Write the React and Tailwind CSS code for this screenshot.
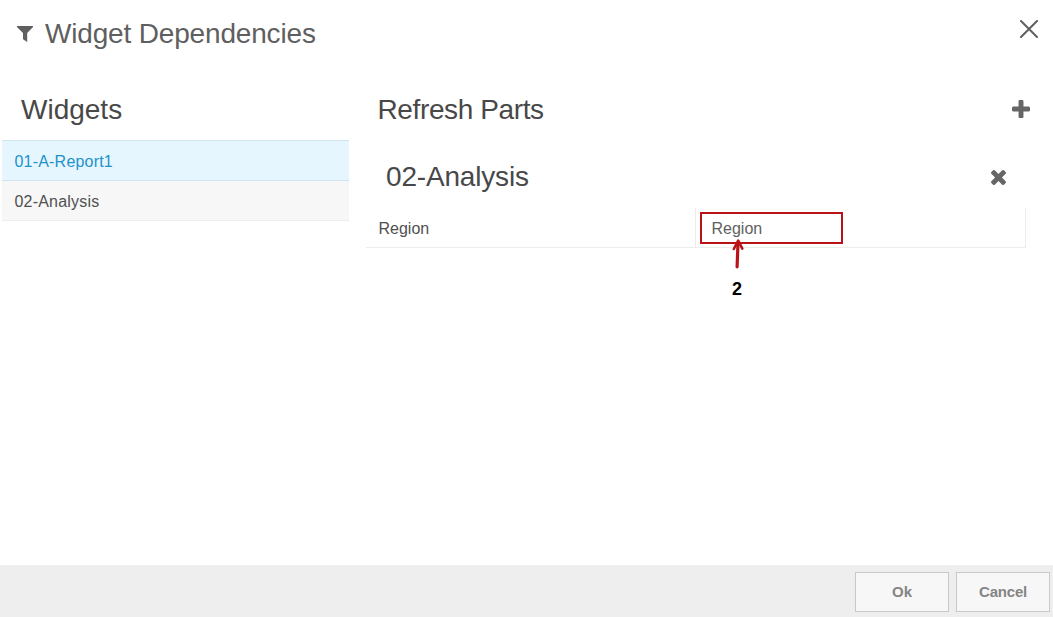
import React from "react";

const FilterIcon = () => (
  <svg className="h-4 w-4" viewBox="0 0 16 16" fill="currentColor" aria-hidden="true">
    <path d="M0 0h16v1L10.2 7v9L6 13.2V7L0 1z" />
  </svg>
);

const PlusIcon = () => (
  <svg className="h-[18px] w-[18px]" viewBox="192 128 1408 1408" fill="currentColor" aria-hidden="true">
    <path d="M1600 736v192q0 40-28 68t-68 28h-416v416q0 40-28 68t-68 28h-192q-40 0-68-28t-28-68v-416h-416q-40 0-68-28t-28-68v-192q0-40 28-68t68-28h416v-416q0-40 28-68t68-28h192q40 0 68 28t28 68v416h416q40 0 68 28t28 68z" />
  </svg>
);

const RemoveIcon = () => (
  <svg className="h-[15px] w-[15px]" viewBox="302 366 1188 1188" fill="currentColor" aria-hidden="true">
    <path d="M1490 1322q0 40-28 68l-136 136q-28 28-68 28t-68-28l-294-294-294 294q-28 28-68 28t-68-28l-136-136q-28-28-28-68t28-68l294-294-294-294q-28-28-28-68t28-68l136-136q28-28 68-28t68 28l294 294 294-294q28-28 68-28t68 28l136 136q28 28 28 68t-28 68l-294 294 294 294q28 28 28 68z" />
  </svg>
);

const CloseIcon = () => (
  <svg className="h-[18px] w-[18px]" viewBox="0 0 18 18" fill="none" stroke="currentColor" strokeWidth="2" strokeLinecap="round" aria-hidden="true">
    <path d="M1 1l16 16M17 1L1 17" />
  </svg>
);

function Callout() {
  return (
    <div className="absolute left-1 top-1 h-8 w-[143px] border-2 border-[#b81418]">
      <svg className="absolute left-[29px] top-[24px] h-[32px] w-[14px]" viewBox="0 0 14 32" fill="none" stroke="#b81418" strokeLinecap="round" strokeLinejoin="round">
        <path d="M6.1 28.8L7 5" strokeWidth="3.2" />
        <path d="M2.8 11L7.2 2.6l4.1 8" strokeWidth="2.6" />
      </svg>
      <span className="absolute left-[30px] top-[65px] text-[18px] leading-5 font-bold text-black">2</span>
    </div>
  );
}

export default function App() {
  return (
    <div className="flex h-[617px] w-[1053px] flex-col overflow-hidden bg-white font-['Liberation_Sans',Arial,sans-serif] text-[#484848]">
      <header className="flex h-[68px] items-center justify-between pr-[15.5px] pl-[17px] text-[#5f5f5f]">
        <div className="flex items-center gap-3">
          <FilterIcon />
          <h1 className="text-[28px] leading-8 tracking-[-0.17px]">Widget Dependencies</h1>
        </div>
        <button className="mb-[10px]" aria-label="Close"><CloseIcon /></button>
      </header>

      <main className="flex flex-1">
        <section className="w-[349px] pl-0.5">
          <h2 className="h-[72px] pt-[26px] pl-[19px] text-[28px] leading-8">Widgets</h2>
          <ul className="text-[16px] leading-5 tracking-[0.2px]">
            <li className="flex h-[41px] items-center border-y border-[#cfe4ee] bg-[#e5f6ff] pt-0.5 pl-[12.5px] text-[#1e92c9]">01-A-Report1</li>
            <li className="flex h-10 items-center border-b border-[#ececec] bg-[#f7f7f7] pt-0.5 pl-[12.5px] text-[#505050]">02-Analysis</li>
          </ul>
        </section>

        <section className="ml-[17px] w-[665px]">
          <div className="flex h-[72px] items-start justify-between pt-[26px] pr-px pl-[11.5px]">
            <h2 className="text-[28px] leading-8 tracking-[-0.38px]">Refresh Parts</h2>
            <button className="mt-[6px] text-[#666]" aria-label="Add"><PlusIcon /></button>
          </div>
          <div className="flex h-[68px] items-start justify-between pt-[21px] pr-[25px] pl-[20px]">
            <h3 className="text-[28px] leading-8 tracking-[-0.18px]">02-Analysis</h3>
            <button className="mt-[9px] text-[#666]" aria-label="Remove"><RemoveIcon /></button>
          </div>
          <div className="flex h-10 w-[660px] border-b border-[#ececec] text-[16px] text-[#505050]">
            <div className="flex w-[330px] items-center border-r border-[#ececec] pt-[3px] pl-[12.5px]">Region</div>
            <div className="relative flex w-[330px] items-center border-r border-[#ececec] pt-[3px] pl-[15.5px] text-[#606060]">
              Region
              <Callout />
            </div>
          </div>
        </section>
      </main>

      <footer className="flex h-[52px] items-center justify-end gap-[7px] bg-[#eee] pt-0.5 pr-[3px] text-[15px] font-bold text-[#858585]">
        <button className="h-10 w-[94px] border border-[#c8c8c8] bg-[#f7f7f7]">Ok</button>
        <button className="h-10 w-[94px] border border-[#c8c8c8] bg-[#f7f7f7] tracking-[-0.2px]">Cancel</button>
      </footer>
    </div>
  );
}
